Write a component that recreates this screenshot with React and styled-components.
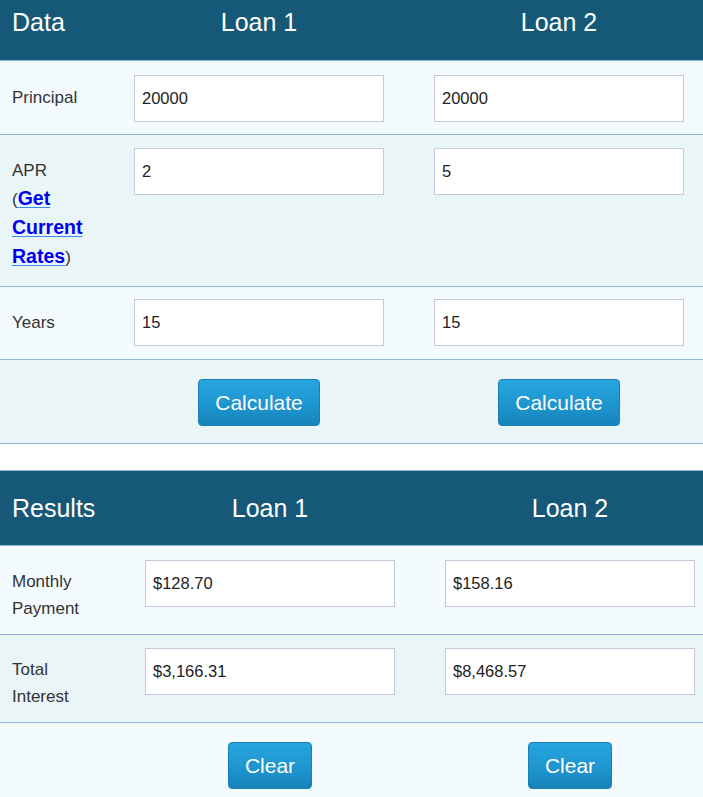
import React from "react";
import styled, { createGlobalStyle } from "styled-components";

const Global = createGlobalStyle`
  html, body { margin: 0; padding: 0; background: #ffffff; overflow-x: hidden; }
  body { font-family: "Liberation Sans", Arial, sans-serif; color: #333; }
`;

const Page = styled.div`
  width: 703px;
  overflow: hidden;
`;

const Table = styled.section`
  display: flex;
  flex-direction: column;
  margin-bottom: ${(p) => p.$gap || 0}px;
`;

const HeaderRow = styled.div`
  display: grid;
  grid-template-columns: ${(p) => p.$label}px 300px 300px;
  align-items: center;
  height: ${(p) => p.$height}px;
  box-sizing: border-box;
  padding-bottom: ${(p) => p.$pb || 0}px;
  background: #165878;
  border-top: ${(p) => (p.$topBorder ? "1px solid #8cb8dc" : "none")};
  border-bottom: 1px solid #8cb8dc;
  color: #ffffff;
  font-size: 25px;
`;

const HeadCell = styled.div`
  text-align: ${(p) => (p.$left ? "left" : "center")};
  padding-left: ${(p) => (p.$left ? "12px" : "0")};
  white-space: nowrap;
`;

const Row = styled.div`
  display: grid;
  grid-template-columns: ${(p) => p.$label}px 300px 300px;
  align-items: start;
  background: ${(p) => (p.$alt ? "#eaf5f8" : "#f3fbfe")};
  border-bottom: 1px solid #8cb8dc;
`;

const LabelCell = styled.div`
  padding: ${(p) => p.$pt}px 0 ${(p) => p.$pb}px 12px;
  font-size: 17px;
  line-height: ${(p) => p.$lh}px;
  color: #333;
`;

const FieldCell = styled.div`
  display: flex;
  justify-content: center;
  padding: ${(p) => p.$pt}px 0 ${(p) => p.$pb ?? 12}px;
`;

const Input = styled.input`
  box-sizing: border-box;
  width: 250px;
  height: 47px;
  border: 1px solid #c4cad9;
  background: #ffffff;
  padding: 0 7px;
  font-family: "Liberation Sans", Arial, sans-serif;
  font-size: 16.5px;
  color: #222;
  outline: none;
  border-radius: 0;
`;

const RateLink = styled.a`
  font-weight: bold;
  font-size: 19.5px;
  line-height: 20px;
  color: #0000ee;
  text-decoration: underline;
  text-decoration-color: #3a8ee6;
  text-underline-offset: 2px;
`;

const ButtonCell = styled.div`
  display: flex;
  justify-content: center;
  padding: 19px 0 17px;
`;

const Button = styled.button`
  box-sizing: border-box;
  height: 47px;
  padding: 0 16px;
  border: 1px solid #1a80b4;
  border-radius: 4px;
  background: linear-gradient(to bottom, #27a6e0 0%, #1e95cf 55%, #1784bb 100%);
  color: #ffffff;
  font-family: "Liberation Sans", Arial, sans-serif;
  font-size: 21px;
  line-height: 1;
  cursor: pointer;
`;

const Spacer = styled.div``;

export default function App() {
  return (
    <Page>
      <Global />
      <Table $gap={26}>
        <HeaderRow $label={109} $height={61} $pb={16}>
          <HeadCell $left>Data</HeadCell>
          <HeadCell>Loan 1</HeadCell>
          <HeadCell>Loan 2</HeadCell>
        </HeaderRow>
        <Row $label={109}>
          <LabelCell $pt={22} $pb={12} $lh={29}>Principal</LabelCell>
          <FieldCell $pt={14}><Input defaultValue="20000" /></FieldCell>
          <FieldCell $pt={14}><Input defaultValue="20000" /></FieldCell>
        </Row>
        <Row $label={109} $alt>
          <LabelCell $pt={21} $pb={14} $lh={29}>
            APR
            <br />
            (<RateLink href="#">Get<br />Current<br />Rates</RateLink>)
          </LabelCell>
          <FieldCell $pt={13}><Input defaultValue="2" /></FieldCell>
          <FieldCell $pt={13}><Input defaultValue="5" /></FieldCell>
        </Row>
        <Row $label={109}>
          <LabelCell $pt={21} $pb={12} $lh={29}>Years</LabelCell>
          <FieldCell $pt={12} $pb={13}><Input defaultValue="15" /></FieldCell>
          <FieldCell $pt={12} $pb={13}><Input defaultValue="15" /></FieldCell>
        </Row>
        <Row $label={109} $alt>
          <Spacer />
          <ButtonCell><Button>Calculate</Button></ButtonCell>
          <ButtonCell><Button>Calculate</Button></ButtonCell>
        </Row>
      </Table>

      <Table>
        <HeaderRow $label={120} $height={76} $topBorder>
          <HeadCell $left>Results</HeadCell>
          <HeadCell>Loan 1</HeadCell>
          <HeadCell>Loan 2</HeadCell>
        </HeaderRow>
        <Row $label={120}>
          <LabelCell $pt={22} $pb={12} $lh={27}>Monthly<br />Payment</LabelCell>
          <FieldCell $pt={14}><Input defaultValue="$128.70" /></FieldCell>
          <FieldCell $pt={14}><Input defaultValue="$158.16" /></FieldCell>
        </Row>
        <Row $label={120} $alt>
          <LabelCell $pt={21} $pb={12} $lh={27}>Total<br />Interest</LabelCell>
          <FieldCell $pt={13}><Input defaultValue="$3,166.31" /></FieldCell>
          <FieldCell $pt={13}><Input defaultValue="$8,468.57" /></FieldCell>
        </Row>
        <Row $label={120}>
          <Spacer />
          <ButtonCell><Button>Clear</Button></ButtonCell>
          <ButtonCell><Button>Clear</Button></ButtonCell>
        </Row>
      </Table>
    </Page>
  );
}
